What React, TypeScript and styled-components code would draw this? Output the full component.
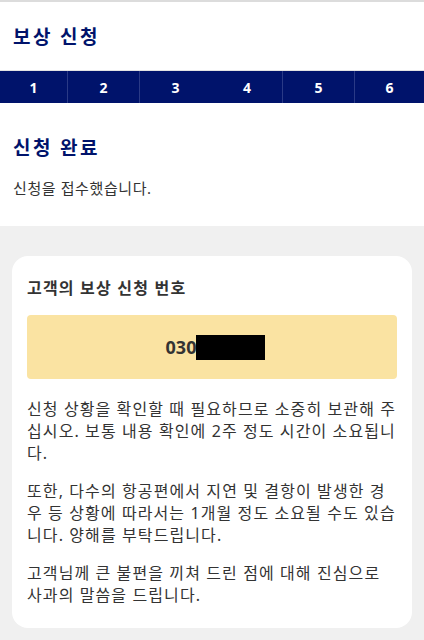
import React from "react";
import styled, { createGlobalStyle } from "styled-components";

const GlobalStyle = createGlobalStyle`
  html, body {
    margin: 0;
    padding: 0;
    background: #f0f0f0;
    font-family: "Noto Sans", "Noto Sans CJK KR", sans-serif;
    color: #333;
  }
  * { box-sizing: border-box; }
`;

const Page = styled.div`
  width: 424px;
  min-height: 640px;
  background: #f0f0f0;
`;

const Header = styled.header`
  background: #fff;
  border-top: 2px solid #dcdcdc;
`;

const PageTitle = styled.h1`
  margin: 0;
  padding: 20px 13px 0;
  height: 68px;
  font-size: 19px;
  font-weight: 700;
  color: #00136b;
  letter-spacing: 2.4px;
`;

const Steps = styled.ol`
  list-style: none;
  margin: 0;
  padding: 0;
  display: grid;
  grid-template-columns: 68px 72px 72px 71px 72px 1fr;
  background: #00136b;
  border-top: 1px solid #e2e2e2;
  height: 33px;
`;

const Step = styled.li<{ $divider: boolean }>`
  display: flex;
  align-items: center;
  justify-content: center;
  color: #fff;
  font-size: 14px;
  font-weight: 700;
  border-right: 1px solid ${(p) => (p.$divider ? "#2a3a86" : "transparent")};
  &:last-child { border-right: none; }
`;

const Done = styled.section`
  background: #fff;
  padding: 30px 13px 28px;
`;

const DoneTitle = styled.h2`
  margin: 0 0 16px;
  font-size: 19px;
  font-weight: 700;
  color: #00136b;
  letter-spacing: 2.4px;
`;

const DoneText = styled.p`
  margin: 0;
  font-size: 15px;
  letter-spacing: 0.6px;
  color: #333;
`;

const Body = styled.main`
  padding: 30px 12px 14px;
`;

const Card = styled.div`
  background: #fff;
  border-radius: 16px;
  padding: 19px 15px 22px;
`;

const CardTitle = styled.h3`
  margin: 0 0 16px;
  font-size: 16px;
  font-weight: 700;
  letter-spacing: 1.2px;
  color: #333;
`;

const NumberBox = styled.div`
  background: #fae3a2;
  border-radius: 4px;
  height: 64px;
  padding-left: 7px;
  display: flex;
  align-items: center;
  justify-content: center;
  font-size: 18px;
  font-weight: 700;
  color: #333;
  margin-bottom: 19px;
`;

const Redacted = styled.span`
  display: inline-block;
  width: 69px;
  height: 25px;
  background: #000;
`;

const Para = styled.p`
  margin: 0 0 16px;
  font-size: 16px;
  letter-spacing: 1.1px;
  line-height: 22px;
  color: #333;
  &:last-child { margin-bottom: 0; }
`;

export default function App() {
  const steps = [1, 2, 3, 4, 5, 6];
  return (
    <Page>
      <GlobalStyle />
      <Header>
        <PageTitle>보상 신청</PageTitle>
        <Steps>
          {steps.map((n) => (
            <Step key={n} $divider={n !== 3}>
              {n}
            </Step>
          ))}
        </Steps>
      </Header>
      <Done>
        <DoneTitle>신청 완료</DoneTitle>
        <DoneText>신청을 접수했습니다.</DoneText>
      </Done>
      <Body>
        <Card>
          <CardTitle>고객의 보상 신청 번호</CardTitle>
          <NumberBox>
            030<Redacted />
          </NumberBox>
          <Para>
            신청 상황을 확인할 때 필요하므로 소중히 보관해 주십시오. 보통 내용 확인에 2주 정도 시간이 소요됩니다.
          </Para>
          <Para>
            또한, 다수의 항공편에서 지연 및 결항이 발생한 경우 등 상황에 따라서는 1개월 정도 소요될 수도 있습니다. 양해를 부탁드립니다.
          </Para>
          <Para>고객님께 큰 불편을 끼쳐 드린 점에 대해 진심으로 사과의 말씀을 드립니다.</Para>
        </Card>
      </Body>
    </Page>
  );
}
